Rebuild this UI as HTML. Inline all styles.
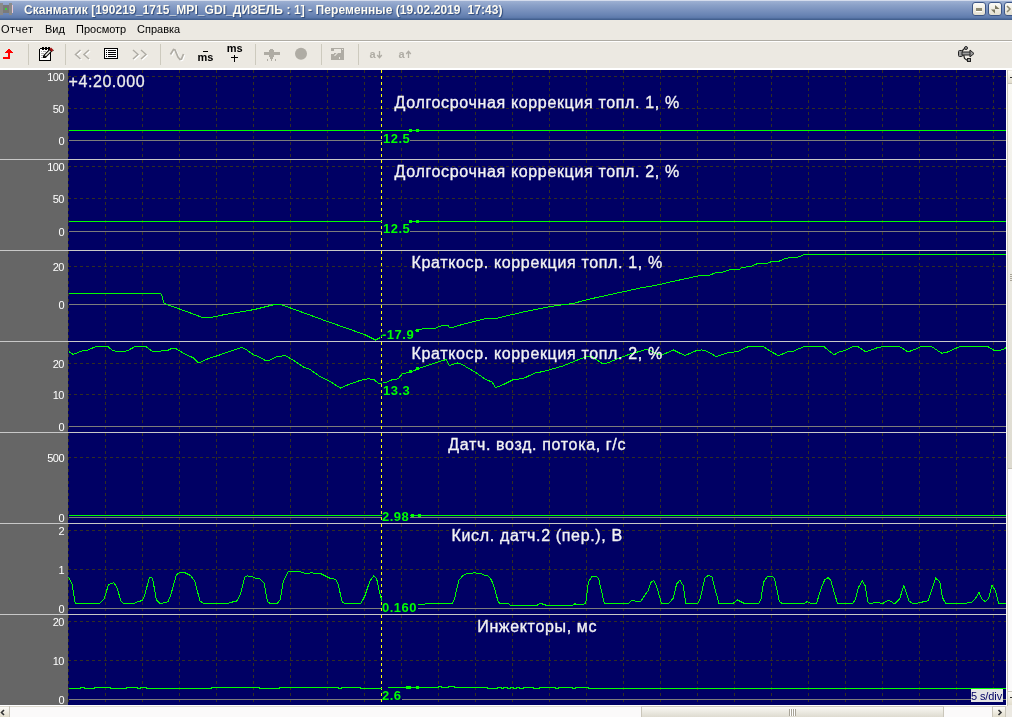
<!DOCTYPE html>
<html><head><meta charset="utf-8">
<style>
html,body{margin:0;padding:0;width:1012px;height:717px;overflow:hidden;background:#ece9e2;font-family:"Liberation Sans",sans-serif;}
#title{position:absolute;left:0;top:0;width:1012px;height:20px;background:linear-gradient(#d3dbec 0px,#d3dbec 1px,#9db0d2 1px,#8ba1c8 5px,#7a92be 10px,#6984b4 15px,#5b78aa 18px,#43608f 19px,#43608f 20px);}
#title .tx{position:absolute;left:24px;top:3px;font-weight:bold;font-size:12px;color:#fffcf2;white-space:pre;text-shadow:1px 1px 1px #2f4a7a;letter-spacing:0.07px}
#menu{position:absolute;left:0;top:20px;width:1012px;height:20px;background:#ece9e2;border-bottom:1px solid #afaca4;}
#menu span{position:absolute;top:3px;font-size:11px;color:#000}
#tbline{position:absolute;left:0;top:41px;width:1012px;height:1px;background:#fff}
#toolbar{position:absolute;left:0;top:42px;width:1012px;height:26px;background:#ece9e2}
#tbbot{position:absolute;left:0;top:68px;width:1012px;height:2px;background:#fff}
svg{position:absolute;left:0;top:0;will-change:transform}
#title .tx,#menu span{will-change:transform}
.al{font-family:"Liberation Sans",sans-serif;font-size:11px;fill:#fff;text-anchor:end;letter-spacing:-0.5px}
.tl{font-family:"Liberation Sans",sans-serif;font-size:16px;fill:#f2f2f2;stroke:#f2f2f2;stroke-width:0.35px;text-anchor:middle;letter-spacing:0.65px}
.tm{font-family:"Liberation Sans",sans-serif;font-size:16px;fill:#ececec;stroke:#ececec;stroke-width:0.3px;letter-spacing:0.55px}
.vl{font-family:"Liberation Sans",sans-serif;font-size:13px;font-weight:bold;fill:#00ff00;letter-spacing:0.5px}
.ms{font-family:"Liberation Sans",sans-serif;font-size:11px;font-weight:bold;fill:#000}
.ad{font-family:"Liberation Sans",sans-serif;font-size:11px;font-weight:bold;fill:#afaca4}
.sd{font-family:"Liberation Sans",sans-serif;font-size:11px;fill:#000064;letter-spacing:-0.1px}
</style></head><body>
<div id="title"><div class="tx">Сканматик [190219_1715_MPI_GDI_ДИЗЕЛЬ : 1] - Переменные (19.02.2019  17:43)</div></div>
<div id="menu"><span style="left:1px;letter-spacing:0.5px">Отчет</span><span style="left:45px">Вид</span><span style="left:76px">Просмотр</span><span style="left:137px">Справка</span></div>
<div id="tbline"></div>
<div id="toolbar"></div>
<div id="tbbot"></div>
<svg width="1012" height="717" viewBox="0 0 1012 717" shape-rendering="crispEdges">
<defs>
<linearGradient id="btn" x1="0" y1="0" x2="0" y2="1"><stop offset="0" stop-color="#fdfcf8"/><stop offset="1" stop-color="#e2ddcc"/></linearGradient>
<linearGradient id="thumb" x1="0" y1="0" x2="0" y2="1"><stop offset="0" stop-color="#f9f8f3"/><stop offset="1" stop-color="#dedbd0"/></linearGradient>
</defs>
<!-- title icon -->
<rect x="0" y="3" width="3" height="12" fill="#8a8a8a"/>
<rect x="9" y="3" width="3" height="12" fill="#8a8a8a"/>
<rect x="3" y="5" width="6" height="8" fill="#7a7a7a"/>
<rect x="5" y="8" width="2" height="2" fill="#3cd23c"/>
<rect x="12" y="5" width="1" height="8" fill="#e8c8d8"/>
<!-- title buttons -->
<g shape-rendering="auto">
<rect x="972.5" y="2.5" width="13" height="13" rx="2.5" fill="url(#btn)" stroke="#3c5586"/>
<rect x="976" y="8" width="6" height="3" fill="#8c8872"/>
<rect x="976" y="11" width="6" height="1" fill="#fff"/>
<rect x="988.5" y="2.5" width="13" height="13" rx="2.5" fill="url(#btn)" stroke="#3c5586"/>
<path d="M995 5 L999.5 9 L995 9 Z M991 9.5 L995 9.5 L995 13.5 Z" fill="#7a7660"/>
<rect x="1004.5" y="2.5" width="13" height="13" rx="2.5" fill="url(#btn)" stroke="#3c5586"/>
<path d="M1007 6 L1010 9 L1007 12" fill="none" stroke="#8a8670" stroke-width="1.5"/>
</g>
<!-- toolbar separators -->
<rect x="28" y="44" width="1" height="21" fill="#cdcabe"/>
<rect x="65" y="44" width="1" height="21" fill="#cdcabe"/>
<rect x="160" y="44" width="1" height="21" fill="#cdcabe"/>
<rect x="255" y="44" width="1" height="21" fill="#cdcabe"/>
<rect x="321" y="44" width="1" height="21" fill="#cdcabe"/>
<rect x="358" y="44" width="1" height="21" fill="#cdcabe"/>
<!-- red arrow -->
<rect x="8" y="49" width="2" height="1" fill="#f00"/><rect x="7" y="50" width="4" height="1" fill="#f00"/><rect x="6" y="51" width="6" height="1" fill="#f00"/><rect x="5" y="52" width="8" height="1" fill="#f00"/><rect x="8" y="53" width="2" height="4" fill="#f00"/><rect x="3" y="57" width="7" height="2" fill="#f00"/>
<!-- notepad -->
<rect x="39" y="49" width="12" height="12" fill="#000"/>
<rect x="40" y="48" width="10" height="13" fill="#000"/>
<rect x="40" y="49" width="10" height="11" fill="#fff"/>
<rect x="42" y="47" width="2" height="3" fill="#000"/>
<rect x="45" y="47" width="2" height="3" fill="#000"/>
<rect x="48" y="47" width="2" height="3" fill="#000"/>
<rect x="41" y="51" width="1" height="1" fill="#b0b0b0"/>
<rect x="43" y="51" width="3" height="1" fill="#b0b0b0"/>
<rect x="41" y="53" width="3" height="1" fill="#b0b0b0"/>
<rect x="41" y="55" width="2" height="1" fill="#b0b0b0"/>
<rect x="41" y="57" width="2" height="1" fill="#b0b0b0"/>
<g shape-rendering="auto">
<path d="M44.5 56.5 L51 50" stroke="#000" stroke-width="3.6"/>
<path d="M45.3 55.7 L50.3 50.7" stroke="#f4f4f0" stroke-width="1.5"/>
<path d="M49.3 49.2 L51 47.5 L53.5 50 L51.8 51.7 Z" fill="#a01010"/>
<path d="M52 51.5 L53.5 50 L54 50.5 Z" fill="#000"/>
<path d="M43 58 L43 55 L46.5 58 Z" fill="#000"/>
</g>
<!-- << shadow -->
<g transform="translate(1,1)" shape-rendering="auto" fill="none" stroke="#ffffff" stroke-width="1.5">
<path d="M80.5 50 L75.5 54.5 L80.5 59"/><path d="M89 50 L84 54.5 L89 59"/>
<path d="M133 50 L138 54.5 L133 59"/><path d="M141 50 L146 54.5 L141 59"/>
<path d="M170.5 54.5 L173.5 49.5 L175 50 L178 57 L180 59.5 L181.5 59 L183.5 54" stroke-width="1.7"/>
</g>
<!-- << -->
<g shape-rendering="auto" fill="none" stroke="#afaca4" stroke-width="1.5">
<path d="M80.5 50 L75.5 54.5 L80.5 59"/><path d="M89 50 L84 54.5 L89 59"/>
<path d="M133 50 L138 54.5 L133 59"/><path d="M141 50 L146 54.5 L141 59"/>
<path d="M170.5 54.5 L173.5 49.5 L175 50 L178 57 L180 59.5 L181.5 59 L183.5 54" stroke-width="1.7"/>
</g>
<!-- list icon -->
<rect x="104" y="48" width="14" height="11" fill="#000"/>
<rect x="105" y="49" width="12" height="9" fill="#fff"/>
<rect x="108" y="50" width="8" height="1" fill="#000"/>
<rect x="108" y="52" width="8" height="1" fill="#000"/>
<rect x="108" y="54" width="8" height="1" fill="#000"/>
<rect x="108" y="56" width="8" height="1" fill="#000"/>
<rect x="106" y="50" width="1" height="1" fill="#000"/>
<rect x="106" y="52" width="1" height="1" fill="#000"/>
<rect x="106" y="54" width="1" height="1" fill="#000"/>
<rect x="106" y="56" width="1" height="1" fill="#000"/>
<!-- ms icons -->
<rect x="203" y="51" width="5" height="1" fill="#000"/>
<text x="197.5" y="60.7" class="ms">ms</text>
<text x="226.8" y="51.8" class="ms">ms</text>
<rect x="231" y="57" width="7" height="1" fill="#000"/>
<rect x="234" y="55" width="1" height="7" fill="#000"/>
<!-- plug -->
<rect x="264" y="52" width="16" height="3" fill="#afaca4"/>
<rect x="270" y="49" width="3" height="10" fill="#afaca4"/>
<rect x="269" y="50" width="5" height="7" fill="#afaca4"/>
<rect x="267" y="59" width="1" height="2" fill="#afaca4"/>
<rect x="271" y="59" width="1" height="2" fill="#afaca4"/>
<rect x="275" y="59" width="1" height="2" fill="#afaca4"/>
<!-- circle -->
<circle cx="301" cy="53.8" r="6" fill="#afaca4" shape-rendering="auto"/>
<!-- save icon -->
<rect x="331" y="48" width="13" height="12" fill="#afaca4"/>
<rect x="334" y="49" width="7" height="4" fill="#ece9e2"/>
<rect x="331" y="51" width="3" height="3" fill="#ece9e2"/>
<rect x="342" y="49" width="1" height="1" fill="#ece9e2"/>
<rect x="339" y="57" width="1" height="2" fill="#ece9e2"/>
<path d="M334.5 55.8 L337.5 52.8" stroke="#ece9e2" stroke-width="1.1" shape-rendering="auto"/>
<!-- a arrows -->
<text x="369.5" y="58" class="ad">a</text>
<path d="M379.5 51 v6 M377.2 55 l2.3 2.7 l2.3 -2.7" fill="none" stroke="#afaca4" stroke-width="1.3" shape-rendering="auto"/>
<text x="398.5" y="58" class="ad">a</text>
<path d="M408.5 58 v-6.5 M406.2 54 l2.3 -2.7 l2.3 2.7" fill="none" stroke="#afaca4" stroke-width="1.3" shape-rendering="auto"/>
<!-- USB -->
<g shape-rendering="auto">
<path d="M962 51 L965.5 47.5" stroke="#222" stroke-width="1.2"/>
<circle cx="966" cy="48" r="1.5" fill="#9a9a9a" stroke="#222" stroke-width="1"/>
<path d="M963.5 54 L964.5 58.5 L967.5 60.5" fill="none" stroke="#222" stroke-width="1.2"/>
<rect x="967.5" y="58.5" width="3" height="3" fill="#9a9a9a" stroke="#222" stroke-width="1"/>
<rect x="958.5" y="50.5" width="4" height="6" rx="1" fill="#9a9a9a" stroke="#222" stroke-width="1"/>
<rect x="962" y="52" width="9" height="3" fill="#9a9a9a" stroke="#222" stroke-width="1"/>
<path d="M970 50 L974 53.5 L970 57 Z" fill="#9a9a9a" stroke="#222" stroke-width="1"/>
</g>
<rect x="0" y="70" width="68" height="635" fill="#666666"/>
<rect x="68" y="70" width="938" height="635" fill="#000064"/>
<line x1="68.5" y1="70" x2="68.5" y2="159" stroke="#322e22" stroke-dasharray="3 3"/>
<line x1="105.5" y1="70" x2="105.5" y2="159" stroke="#322e22" stroke-dasharray="3 3"/>
<line x1="142.5" y1="70" x2="142.5" y2="159" stroke="#322e22" stroke-dasharray="3 3"/>
<line x1="179.5" y1="70" x2="179.5" y2="159" stroke="#322e22" stroke-dasharray="3 3"/>
<line x1="216.5" y1="70" x2="216.5" y2="159" stroke="#322e22" stroke-dasharray="3 3"/>
<line x1="253.5" y1="70" x2="253.5" y2="159" stroke="#322e22" stroke-dasharray="3 3"/>
<line x1="290.5" y1="70" x2="290.5" y2="159" stroke="#322e22" stroke-dasharray="3 3"/>
<line x1="327.5" y1="70" x2="327.5" y2="159" stroke="#322e22" stroke-dasharray="3 3"/>
<line x1="364.5" y1="70" x2="364.5" y2="159" stroke="#322e22" stroke-dasharray="3 3"/>
<line x1="401.5" y1="70" x2="401.5" y2="159" stroke="#322e22" stroke-dasharray="3 3"/>
<line x1="438.5" y1="70" x2="438.5" y2="159" stroke="#322e22" stroke-dasharray="3 3"/>
<line x1="475.5" y1="70" x2="475.5" y2="159" stroke="#322e22" stroke-dasharray="3 3"/>
<line x1="512.5" y1="70" x2="512.5" y2="159" stroke="#322e22" stroke-dasharray="3 3"/>
<line x1="549.5" y1="70" x2="549.5" y2="159" stroke="#322e22" stroke-dasharray="3 3"/>
<line x1="586.5" y1="70" x2="586.5" y2="159" stroke="#322e22" stroke-dasharray="3 3"/>
<line x1="623.5" y1="70" x2="623.5" y2="159" stroke="#322e22" stroke-dasharray="3 3"/>
<line x1="660.5" y1="70" x2="660.5" y2="159" stroke="#322e22" stroke-dasharray="3 3"/>
<line x1="697.5" y1="70" x2="697.5" y2="159" stroke="#322e22" stroke-dasharray="3 3"/>
<line x1="734.5" y1="70" x2="734.5" y2="159" stroke="#322e22" stroke-dasharray="3 3"/>
<line x1="771.5" y1="70" x2="771.5" y2="159" stroke="#322e22" stroke-dasharray="3 3"/>
<line x1="808.5" y1="70" x2="808.5" y2="159" stroke="#322e22" stroke-dasharray="3 3"/>
<line x1="845.5" y1="70" x2="845.5" y2="159" stroke="#322e22" stroke-dasharray="3 3"/>
<line x1="882.5" y1="70" x2="882.5" y2="159" stroke="#322e22" stroke-dasharray="3 3"/>
<line x1="919.5" y1="70" x2="919.5" y2="159" stroke="#322e22" stroke-dasharray="3 3"/>
<line x1="956.5" y1="70" x2="956.5" y2="159" stroke="#322e22" stroke-dasharray="3 3"/>
<line x1="993.5" y1="70" x2="993.5" y2="159" stroke="#322e22" stroke-dasharray="3 3"/>
<line x1="68" y1="76.5" x2="1006" y2="76.5" stroke="#322e22" stroke-dasharray="3 3"/>
<line x1="68" y1="108.5" x2="1006" y2="108.5" stroke="#322e22" stroke-dasharray="3 3"/>
<line x1="69" y1="140.5" x2="1006" y2="140.5" stroke="#7c7c7c"/>
<line x1="68.5" y1="160" x2="68.5" y2="250" stroke="#322e22" stroke-dasharray="3 3"/>
<line x1="105.5" y1="160" x2="105.5" y2="250" stroke="#322e22" stroke-dasharray="3 3"/>
<line x1="142.5" y1="160" x2="142.5" y2="250" stroke="#322e22" stroke-dasharray="3 3"/>
<line x1="179.5" y1="160" x2="179.5" y2="250" stroke="#322e22" stroke-dasharray="3 3"/>
<line x1="216.5" y1="160" x2="216.5" y2="250" stroke="#322e22" stroke-dasharray="3 3"/>
<line x1="253.5" y1="160" x2="253.5" y2="250" stroke="#322e22" stroke-dasharray="3 3"/>
<line x1="290.5" y1="160" x2="290.5" y2="250" stroke="#322e22" stroke-dasharray="3 3"/>
<line x1="327.5" y1="160" x2="327.5" y2="250" stroke="#322e22" stroke-dasharray="3 3"/>
<line x1="364.5" y1="160" x2="364.5" y2="250" stroke="#322e22" stroke-dasharray="3 3"/>
<line x1="401.5" y1="160" x2="401.5" y2="250" stroke="#322e22" stroke-dasharray="3 3"/>
<line x1="438.5" y1="160" x2="438.5" y2="250" stroke="#322e22" stroke-dasharray="3 3"/>
<line x1="475.5" y1="160" x2="475.5" y2="250" stroke="#322e22" stroke-dasharray="3 3"/>
<line x1="512.5" y1="160" x2="512.5" y2="250" stroke="#322e22" stroke-dasharray="3 3"/>
<line x1="549.5" y1="160" x2="549.5" y2="250" stroke="#322e22" stroke-dasharray="3 3"/>
<line x1="586.5" y1="160" x2="586.5" y2="250" stroke="#322e22" stroke-dasharray="3 3"/>
<line x1="623.5" y1="160" x2="623.5" y2="250" stroke="#322e22" stroke-dasharray="3 3"/>
<line x1="660.5" y1="160" x2="660.5" y2="250" stroke="#322e22" stroke-dasharray="3 3"/>
<line x1="697.5" y1="160" x2="697.5" y2="250" stroke="#322e22" stroke-dasharray="3 3"/>
<line x1="734.5" y1="160" x2="734.5" y2="250" stroke="#322e22" stroke-dasharray="3 3"/>
<line x1="771.5" y1="160" x2="771.5" y2="250" stroke="#322e22" stroke-dasharray="3 3"/>
<line x1="808.5" y1="160" x2="808.5" y2="250" stroke="#322e22" stroke-dasharray="3 3"/>
<line x1="845.5" y1="160" x2="845.5" y2="250" stroke="#322e22" stroke-dasharray="3 3"/>
<line x1="882.5" y1="160" x2="882.5" y2="250" stroke="#322e22" stroke-dasharray="3 3"/>
<line x1="919.5" y1="160" x2="919.5" y2="250" stroke="#322e22" stroke-dasharray="3 3"/>
<line x1="956.5" y1="160" x2="956.5" y2="250" stroke="#322e22" stroke-dasharray="3 3"/>
<line x1="993.5" y1="160" x2="993.5" y2="250" stroke="#322e22" stroke-dasharray="3 3"/>
<line x1="68" y1="166.5" x2="1006" y2="166.5" stroke="#322e22" stroke-dasharray="3 3"/>
<line x1="68" y1="198.5" x2="1006" y2="198.5" stroke="#322e22" stroke-dasharray="3 3"/>
<line x1="69" y1="231.5" x2="1006" y2="231.5" stroke="#7c7c7c"/>
<line x1="68.5" y1="251" x2="68.5" y2="341" stroke="#322e22" stroke-dasharray="3 3"/>
<line x1="105.5" y1="251" x2="105.5" y2="341" stroke="#322e22" stroke-dasharray="3 3"/>
<line x1="142.5" y1="251" x2="142.5" y2="341" stroke="#322e22" stroke-dasharray="3 3"/>
<line x1="179.5" y1="251" x2="179.5" y2="341" stroke="#322e22" stroke-dasharray="3 3"/>
<line x1="216.5" y1="251" x2="216.5" y2="341" stroke="#322e22" stroke-dasharray="3 3"/>
<line x1="253.5" y1="251" x2="253.5" y2="341" stroke="#322e22" stroke-dasharray="3 3"/>
<line x1="290.5" y1="251" x2="290.5" y2="341" stroke="#322e22" stroke-dasharray="3 3"/>
<line x1="327.5" y1="251" x2="327.5" y2="341" stroke="#322e22" stroke-dasharray="3 3"/>
<line x1="364.5" y1="251" x2="364.5" y2="341" stroke="#322e22" stroke-dasharray="3 3"/>
<line x1="401.5" y1="251" x2="401.5" y2="341" stroke="#322e22" stroke-dasharray="3 3"/>
<line x1="438.5" y1="251" x2="438.5" y2="341" stroke="#322e22" stroke-dasharray="3 3"/>
<line x1="475.5" y1="251" x2="475.5" y2="341" stroke="#322e22" stroke-dasharray="3 3"/>
<line x1="512.5" y1="251" x2="512.5" y2="341" stroke="#322e22" stroke-dasharray="3 3"/>
<line x1="549.5" y1="251" x2="549.5" y2="341" stroke="#322e22" stroke-dasharray="3 3"/>
<line x1="586.5" y1="251" x2="586.5" y2="341" stroke="#322e22" stroke-dasharray="3 3"/>
<line x1="623.5" y1="251" x2="623.5" y2="341" stroke="#322e22" stroke-dasharray="3 3"/>
<line x1="660.5" y1="251" x2="660.5" y2="341" stroke="#322e22" stroke-dasharray="3 3"/>
<line x1="697.5" y1="251" x2="697.5" y2="341" stroke="#322e22" stroke-dasharray="3 3"/>
<line x1="734.5" y1="251" x2="734.5" y2="341" stroke="#322e22" stroke-dasharray="3 3"/>
<line x1="771.5" y1="251" x2="771.5" y2="341" stroke="#322e22" stroke-dasharray="3 3"/>
<line x1="808.5" y1="251" x2="808.5" y2="341" stroke="#322e22" stroke-dasharray="3 3"/>
<line x1="845.5" y1="251" x2="845.5" y2="341" stroke="#322e22" stroke-dasharray="3 3"/>
<line x1="882.5" y1="251" x2="882.5" y2="341" stroke="#322e22" stroke-dasharray="3 3"/>
<line x1="919.5" y1="251" x2="919.5" y2="341" stroke="#322e22" stroke-dasharray="3 3"/>
<line x1="956.5" y1="251" x2="956.5" y2="341" stroke="#322e22" stroke-dasharray="3 3"/>
<line x1="993.5" y1="251" x2="993.5" y2="341" stroke="#322e22" stroke-dasharray="3 3"/>
<line x1="68" y1="266.5" x2="1006" y2="266.5" stroke="#322e22" stroke-dasharray="3 3"/>
<line x1="69" y1="304.5" x2="1006" y2="304.5" stroke="#7c7c7c"/>
<line x1="68.5" y1="342" x2="68.5" y2="432" stroke="#322e22" stroke-dasharray="3 3"/>
<line x1="105.5" y1="342" x2="105.5" y2="432" stroke="#322e22" stroke-dasharray="3 3"/>
<line x1="142.5" y1="342" x2="142.5" y2="432" stroke="#322e22" stroke-dasharray="3 3"/>
<line x1="179.5" y1="342" x2="179.5" y2="432" stroke="#322e22" stroke-dasharray="3 3"/>
<line x1="216.5" y1="342" x2="216.5" y2="432" stroke="#322e22" stroke-dasharray="3 3"/>
<line x1="253.5" y1="342" x2="253.5" y2="432" stroke="#322e22" stroke-dasharray="3 3"/>
<line x1="290.5" y1="342" x2="290.5" y2="432" stroke="#322e22" stroke-dasharray="3 3"/>
<line x1="327.5" y1="342" x2="327.5" y2="432" stroke="#322e22" stroke-dasharray="3 3"/>
<line x1="364.5" y1="342" x2="364.5" y2="432" stroke="#322e22" stroke-dasharray="3 3"/>
<line x1="401.5" y1="342" x2="401.5" y2="432" stroke="#322e22" stroke-dasharray="3 3"/>
<line x1="438.5" y1="342" x2="438.5" y2="432" stroke="#322e22" stroke-dasharray="3 3"/>
<line x1="475.5" y1="342" x2="475.5" y2="432" stroke="#322e22" stroke-dasharray="3 3"/>
<line x1="512.5" y1="342" x2="512.5" y2="432" stroke="#322e22" stroke-dasharray="3 3"/>
<line x1="549.5" y1="342" x2="549.5" y2="432" stroke="#322e22" stroke-dasharray="3 3"/>
<line x1="586.5" y1="342" x2="586.5" y2="432" stroke="#322e22" stroke-dasharray="3 3"/>
<line x1="623.5" y1="342" x2="623.5" y2="432" stroke="#322e22" stroke-dasharray="3 3"/>
<line x1="660.5" y1="342" x2="660.5" y2="432" stroke="#322e22" stroke-dasharray="3 3"/>
<line x1="697.5" y1="342" x2="697.5" y2="432" stroke="#322e22" stroke-dasharray="3 3"/>
<line x1="734.5" y1="342" x2="734.5" y2="432" stroke="#322e22" stroke-dasharray="3 3"/>
<line x1="771.5" y1="342" x2="771.5" y2="432" stroke="#322e22" stroke-dasharray="3 3"/>
<line x1="808.5" y1="342" x2="808.5" y2="432" stroke="#322e22" stroke-dasharray="3 3"/>
<line x1="845.5" y1="342" x2="845.5" y2="432" stroke="#322e22" stroke-dasharray="3 3"/>
<line x1="882.5" y1="342" x2="882.5" y2="432" stroke="#322e22" stroke-dasharray="3 3"/>
<line x1="919.5" y1="342" x2="919.5" y2="432" stroke="#322e22" stroke-dasharray="3 3"/>
<line x1="956.5" y1="342" x2="956.5" y2="432" stroke="#322e22" stroke-dasharray="3 3"/>
<line x1="993.5" y1="342" x2="993.5" y2="432" stroke="#322e22" stroke-dasharray="3 3"/>
<line x1="68" y1="363.5" x2="1006" y2="363.5" stroke="#322e22" stroke-dasharray="3 3"/>
<line x1="68" y1="394.5" x2="1006" y2="394.5" stroke="#322e22" stroke-dasharray="3 3"/>
<line x1="69" y1="426.5" x2="1006" y2="426.5" stroke="#7c7c7c"/>
<line x1="68.5" y1="433" x2="68.5" y2="523" stroke="#322e22" stroke-dasharray="3 3"/>
<line x1="105.5" y1="433" x2="105.5" y2="523" stroke="#322e22" stroke-dasharray="3 3"/>
<line x1="142.5" y1="433" x2="142.5" y2="523" stroke="#322e22" stroke-dasharray="3 3"/>
<line x1="179.5" y1="433" x2="179.5" y2="523" stroke="#322e22" stroke-dasharray="3 3"/>
<line x1="216.5" y1="433" x2="216.5" y2="523" stroke="#322e22" stroke-dasharray="3 3"/>
<line x1="253.5" y1="433" x2="253.5" y2="523" stroke="#322e22" stroke-dasharray="3 3"/>
<line x1="290.5" y1="433" x2="290.5" y2="523" stroke="#322e22" stroke-dasharray="3 3"/>
<line x1="327.5" y1="433" x2="327.5" y2="523" stroke="#322e22" stroke-dasharray="3 3"/>
<line x1="364.5" y1="433" x2="364.5" y2="523" stroke="#322e22" stroke-dasharray="3 3"/>
<line x1="401.5" y1="433" x2="401.5" y2="523" stroke="#322e22" stroke-dasharray="3 3"/>
<line x1="438.5" y1="433" x2="438.5" y2="523" stroke="#322e22" stroke-dasharray="3 3"/>
<line x1="475.5" y1="433" x2="475.5" y2="523" stroke="#322e22" stroke-dasharray="3 3"/>
<line x1="512.5" y1="433" x2="512.5" y2="523" stroke="#322e22" stroke-dasharray="3 3"/>
<line x1="549.5" y1="433" x2="549.5" y2="523" stroke="#322e22" stroke-dasharray="3 3"/>
<line x1="586.5" y1="433" x2="586.5" y2="523" stroke="#322e22" stroke-dasharray="3 3"/>
<line x1="623.5" y1="433" x2="623.5" y2="523" stroke="#322e22" stroke-dasharray="3 3"/>
<line x1="660.5" y1="433" x2="660.5" y2="523" stroke="#322e22" stroke-dasharray="3 3"/>
<line x1="697.5" y1="433" x2="697.5" y2="523" stroke="#322e22" stroke-dasharray="3 3"/>
<line x1="734.5" y1="433" x2="734.5" y2="523" stroke="#322e22" stroke-dasharray="3 3"/>
<line x1="771.5" y1="433" x2="771.5" y2="523" stroke="#322e22" stroke-dasharray="3 3"/>
<line x1="808.5" y1="433" x2="808.5" y2="523" stroke="#322e22" stroke-dasharray="3 3"/>
<line x1="845.5" y1="433" x2="845.5" y2="523" stroke="#322e22" stroke-dasharray="3 3"/>
<line x1="882.5" y1="433" x2="882.5" y2="523" stroke="#322e22" stroke-dasharray="3 3"/>
<line x1="919.5" y1="433" x2="919.5" y2="523" stroke="#322e22" stroke-dasharray="3 3"/>
<line x1="956.5" y1="433" x2="956.5" y2="523" stroke="#322e22" stroke-dasharray="3 3"/>
<line x1="993.5" y1="433" x2="993.5" y2="523" stroke="#322e22" stroke-dasharray="3 3"/>
<line x1="68" y1="457.5" x2="1006" y2="457.5" stroke="#322e22" stroke-dasharray="3 3"/>
<line x1="69" y1="517.5" x2="1006" y2="517.5" stroke="#7c7c7c"/>
<line x1="68.5" y1="524" x2="68.5" y2="614" stroke="#322e22" stroke-dasharray="3 3"/>
<line x1="105.5" y1="524" x2="105.5" y2="614" stroke="#322e22" stroke-dasharray="3 3"/>
<line x1="142.5" y1="524" x2="142.5" y2="614" stroke="#322e22" stroke-dasharray="3 3"/>
<line x1="179.5" y1="524" x2="179.5" y2="614" stroke="#322e22" stroke-dasharray="3 3"/>
<line x1="216.5" y1="524" x2="216.5" y2="614" stroke="#322e22" stroke-dasharray="3 3"/>
<line x1="253.5" y1="524" x2="253.5" y2="614" stroke="#322e22" stroke-dasharray="3 3"/>
<line x1="290.5" y1="524" x2="290.5" y2="614" stroke="#322e22" stroke-dasharray="3 3"/>
<line x1="327.5" y1="524" x2="327.5" y2="614" stroke="#322e22" stroke-dasharray="3 3"/>
<line x1="364.5" y1="524" x2="364.5" y2="614" stroke="#322e22" stroke-dasharray="3 3"/>
<line x1="401.5" y1="524" x2="401.5" y2="614" stroke="#322e22" stroke-dasharray="3 3"/>
<line x1="438.5" y1="524" x2="438.5" y2="614" stroke="#322e22" stroke-dasharray="3 3"/>
<line x1="475.5" y1="524" x2="475.5" y2="614" stroke="#322e22" stroke-dasharray="3 3"/>
<line x1="512.5" y1="524" x2="512.5" y2="614" stroke="#322e22" stroke-dasharray="3 3"/>
<line x1="549.5" y1="524" x2="549.5" y2="614" stroke="#322e22" stroke-dasharray="3 3"/>
<line x1="586.5" y1="524" x2="586.5" y2="614" stroke="#322e22" stroke-dasharray="3 3"/>
<line x1="623.5" y1="524" x2="623.5" y2="614" stroke="#322e22" stroke-dasharray="3 3"/>
<line x1="660.5" y1="524" x2="660.5" y2="614" stroke="#322e22" stroke-dasharray="3 3"/>
<line x1="697.5" y1="524" x2="697.5" y2="614" stroke="#322e22" stroke-dasharray="3 3"/>
<line x1="734.5" y1="524" x2="734.5" y2="614" stroke="#322e22" stroke-dasharray="3 3"/>
<line x1="771.5" y1="524" x2="771.5" y2="614" stroke="#322e22" stroke-dasharray="3 3"/>
<line x1="808.5" y1="524" x2="808.5" y2="614" stroke="#322e22" stroke-dasharray="3 3"/>
<line x1="845.5" y1="524" x2="845.5" y2="614" stroke="#322e22" stroke-dasharray="3 3"/>
<line x1="882.5" y1="524" x2="882.5" y2="614" stroke="#322e22" stroke-dasharray="3 3"/>
<line x1="919.5" y1="524" x2="919.5" y2="614" stroke="#322e22" stroke-dasharray="3 3"/>
<line x1="956.5" y1="524" x2="956.5" y2="614" stroke="#322e22" stroke-dasharray="3 3"/>
<line x1="993.5" y1="524" x2="993.5" y2="614" stroke="#322e22" stroke-dasharray="3 3"/>
<line x1="68" y1="530.5" x2="1006" y2="530.5" stroke="#322e22" stroke-dasharray="3 3"/>
<line x1="68" y1="569.5" x2="1006" y2="569.5" stroke="#322e22" stroke-dasharray="3 3"/>
<line x1="69" y1="608.5" x2="1006" y2="608.5" stroke="#7c7c7c"/>
<line x1="68.5" y1="615" x2="68.5" y2="705" stroke="#322e22" stroke-dasharray="3 3"/>
<line x1="105.5" y1="615" x2="105.5" y2="705" stroke="#322e22" stroke-dasharray="3 3"/>
<line x1="142.5" y1="615" x2="142.5" y2="705" stroke="#322e22" stroke-dasharray="3 3"/>
<line x1="179.5" y1="615" x2="179.5" y2="705" stroke="#322e22" stroke-dasharray="3 3"/>
<line x1="216.5" y1="615" x2="216.5" y2="705" stroke="#322e22" stroke-dasharray="3 3"/>
<line x1="253.5" y1="615" x2="253.5" y2="705" stroke="#322e22" stroke-dasharray="3 3"/>
<line x1="290.5" y1="615" x2="290.5" y2="705" stroke="#322e22" stroke-dasharray="3 3"/>
<line x1="327.5" y1="615" x2="327.5" y2="705" stroke="#322e22" stroke-dasharray="3 3"/>
<line x1="364.5" y1="615" x2="364.5" y2="705" stroke="#322e22" stroke-dasharray="3 3"/>
<line x1="401.5" y1="615" x2="401.5" y2="705" stroke="#322e22" stroke-dasharray="3 3"/>
<line x1="438.5" y1="615" x2="438.5" y2="705" stroke="#322e22" stroke-dasharray="3 3"/>
<line x1="475.5" y1="615" x2="475.5" y2="705" stroke="#322e22" stroke-dasharray="3 3"/>
<line x1="512.5" y1="615" x2="512.5" y2="705" stroke="#322e22" stroke-dasharray="3 3"/>
<line x1="549.5" y1="615" x2="549.5" y2="705" stroke="#322e22" stroke-dasharray="3 3"/>
<line x1="586.5" y1="615" x2="586.5" y2="705" stroke="#322e22" stroke-dasharray="3 3"/>
<line x1="623.5" y1="615" x2="623.5" y2="705" stroke="#322e22" stroke-dasharray="3 3"/>
<line x1="660.5" y1="615" x2="660.5" y2="705" stroke="#322e22" stroke-dasharray="3 3"/>
<line x1="697.5" y1="615" x2="697.5" y2="705" stroke="#322e22" stroke-dasharray="3 3"/>
<line x1="734.5" y1="615" x2="734.5" y2="705" stroke="#322e22" stroke-dasharray="3 3"/>
<line x1="771.5" y1="615" x2="771.5" y2="705" stroke="#322e22" stroke-dasharray="3 3"/>
<line x1="808.5" y1="615" x2="808.5" y2="705" stroke="#322e22" stroke-dasharray="3 3"/>
<line x1="845.5" y1="615" x2="845.5" y2="705" stroke="#322e22" stroke-dasharray="3 3"/>
<line x1="882.5" y1="615" x2="882.5" y2="705" stroke="#322e22" stroke-dasharray="3 3"/>
<line x1="919.5" y1="615" x2="919.5" y2="705" stroke="#322e22" stroke-dasharray="3 3"/>
<line x1="956.5" y1="615" x2="956.5" y2="705" stroke="#322e22" stroke-dasharray="3 3"/>
<line x1="993.5" y1="615" x2="993.5" y2="705" stroke="#322e22" stroke-dasharray="3 3"/>
<line x1="68" y1="621.5" x2="1006" y2="621.5" stroke="#322e22" stroke-dasharray="3 3"/>
<line x1="68" y1="660.5" x2="1006" y2="660.5" stroke="#322e22" stroke-dasharray="3 3"/>
<line x1="69" y1="699.5" x2="1006" y2="699.5" stroke="#7c7c7c"/>
<rect x="0" y="159" width="1006" height="1" fill="#c8c8c8"/>
<rect x="0" y="250" width="1006" height="1" fill="#c8c8c8"/>
<rect x="0" y="341" width="1006" height="1" fill="#c8c8c8"/>
<rect x="0" y="432" width="1006" height="1" fill="#c8c8c8"/>
<rect x="0" y="523" width="1006" height="1" fill="#c8c8c8"/>
<rect x="0" y="614" width="1006" height="1" fill="#c8c8c8"/>
<line x1="381.5" y1="70" x2="381.5" y2="159" stroke="#ffff00" stroke-dasharray="3 3"/>
<line x1="381.5" y1="160" x2="381.5" y2="250" stroke="#ffff00" stroke-dasharray="3 3"/>
<line x1="381.5" y1="251" x2="381.5" y2="341" stroke="#ffff00" stroke-dasharray="3 3"/>
<line x1="381.5" y1="342" x2="381.5" y2="432" stroke="#ffff00" stroke-dasharray="3 3"/>
<line x1="381.5" y1="433" x2="381.5" y2="523" stroke="#ffff00" stroke-dasharray="3 3"/>
<line x1="381.5" y1="524" x2="381.5" y2="614" stroke="#ffff00" stroke-dasharray="3 3"/>
<line x1="381.5" y1="615" x2="381.5" y2="705" stroke="#ffff00" stroke-dasharray="3 3"/>
<polyline points="68.5,130.5 1005.5,130.5" fill="none" stroke="#00ff00" stroke-width="1"/>
<polyline points="68.5,221.5 1005.5,221.5" fill="none" stroke="#00ff00" stroke-width="1"/>
<polyline points="68.5,293.5 160.5,293.5 162.5,296.5 163.5,302.5 166.5,304.5 179.5,309.0 194.5,314.5 202.5,317.5 210.5,317.5 222.5,315.0 254.5,309.5 276.5,304.0 279.5,304.0 327.5,321.5 364.5,334.5 375.5,340.0 380.5,337.5 382.5,335.0 388.5,333.5 415.5,330.5 420.5,329.5 425.5,328.1 435.5,328.1 443.5,325.0 447.5,325.0 450.0,328.1 455.5,326.5 460.5,325.0 484.9,318.8 497.8,318.0 524.7,311.6 550.4,306.5 565.8,304.4 573.5,303.4 587.7,299.5 614.7,293.6 640.4,288.0 655.8,285.4 671.2,281.8 699.5,275.7 708.1,275.7 715.5,272.9 721.5,272.4 729.1,269.9 738.3,269.9 741.7,267.8 751.7,266.0 757.5,263.6 766.9,263.6 772.7,261.0 779.5,261.0 786.2,258.1 796.2,257.6 801.3,255.9 803.8,254.5 1005.5,254.5" fill="none" stroke="#00ff00" stroke-width="1"/>
<polyline points="68.9,351.6 73.1,354.5 82.3,350.8 87.4,350.3 94.9,346.9 108.4,346.9 111.7,349.9 117.6,351.9 123.5,351.6 127.7,350.6 134.4,346.9 146.2,346.9 151.2,350.6 154.6,351.9 158.8,351.6 163.0,350.3 168.0,350.3 172.2,348.1 176.4,348.9 184.8,354.0 193.2,357.8 197.4,362.0 200.8,362.0 208.3,358.7 220.1,354.8 225.5,352.8 232.2,350.6 240.6,347.7 244.0,348.1 253.2,354.5 260.8,357.8 265.8,360.8 269.2,360.3 275.9,357.0 281.8,356.1 284.3,355.3 288.5,357.3 296.1,362.0 302.8,366.7 310.3,369.6 319.6,376.3 329.7,381.3 340.6,388.1 348.1,384.7 359.9,380.5 368.3,378.8 374.2,379.7 378.5,383.5 381.5,383.5 385.5,382.5 392.3,379.7 398.2,378.8 402.4,373.8 410.8,372.1 418.3,368.7 432.6,363.7 446.1,359.5 449.4,365.4 457.8,362.9 460.3,363.4 476.3,372.9 484.7,378.8 492.2,382.2 495.6,387.6 503.2,384.7 513.2,379.7 523.3,378.5 535.1,372.9 541.8,371.8 547.2,370.4 562.3,366.2 580.8,358.7 586.7,356.6 592.6,357.0 602.7,363.7 607.7,362.9 617.8,358.7 631.2,353.6 637.9,351.9 645.5,349.4 651.4,351.1 658.1,354.5 661.5,355.3 673.2,349.9 685.0,355.6 695.0,351.1 701.8,349.9 705.5,350.6 716.4,356.6 727.3,352.8 737.4,351.6 748.3,346.6 763.5,346.6 769.3,350.6 778.6,355.8 787.8,351.6 793.7,351.1 803.8,346.6 823.9,346.6 834.0,354.8 839.9,351.6 845.8,350.3 852.6,346.6 858.5,346.9 866.0,351.9 876.1,348.1 882.8,346.6 899.6,346.6 908.0,351.9 916.4,348.9 920.6,346.6 931.5,346.6 941.6,353.1 945.8,352.8 958.4,347.2 960.1,346.6 987.8,346.6 994.5,350.6 1002.1,349.9 1006.0,347.7" fill="none" stroke="#00ff00" stroke-width="1"/>
<polyline points="68.5,515.5 1005.5,515.5" fill="none" stroke="#00ff00" stroke-width="1"/>
<polyline points="68.5,577.3 71.9,583.2 75.3,603.8 99.1,603.8 104.2,599.1 108.4,584.9 110.9,583.7 113.9,582.7 116.8,587.4 121.0,600.8 124.0,603.8 133.6,603.8 137.8,601.7 142.5,600.5 144.5,595.8 149.5,577.3 152.6,578.1 156.3,600.0 160.5,603.8 168.0,601.7 171.0,594.1 176.4,574.8 179.8,572.6 184.8,572.6 190.7,575.6 194.9,581.5 199.9,600.8 204.1,603.8 225.5,603.8 237.3,600.8 240.6,594.1 244.8,577.3 247.3,576.0 251.5,576.1 255.7,578.6 259.9,579.0 264.1,583.2 267.5,601.7 270.5,603.8 276.7,603.8 280.1,600.0 283.5,580.7 288.0,571.9 301.1,571.9 306.1,573.9 311.2,572.8 321.3,573.9 329.6,578.1 335.5,579.3 338.0,584.0 342.2,601.7 345.1,603.8 360.7,603.8 364.9,595.8 370.0,580.7 373.7,576.0 376.7,579.0 379.2,590.7 382.6,603.3 384.5,604.5 418.3,605.0 424.2,604.5 425.1,603.8 451.9,603.8 454.5,599.1 458.7,580.7 462.9,575.6 467.0,573.6 474.6,572.8 481.3,573.6 484.7,575.6 488.0,576.0 491.4,579.8 494.8,589.1 498.1,601.7 500.6,603.8 509.0,603.8 509.9,605.0 537.6,605.0 539.3,603.8 541.8,603.8 545.5,605.0 573.3,605.0 574.9,603.8 578.3,605.0 585.0,603.8 585.9,601.7 588.4,582.3 591.7,576.5 595.9,576.5 598.5,578.1 604.3,603.3 605.2,603.8 627.9,603.8 631.2,600.8 634.6,600.8 636.3,601.7 640.5,601.7 648.0,590.7 651.4,581.5 653.9,580.7 656.4,585.7 661.5,603.3 663.1,603.8 668.2,603.8 673.2,598.3 676.6,584.0 679.9,580.3 683.3,585.7 685.8,603.3 697.6,603.8 700.1,599.1 705.1,577.3 708.9,575.3 712.2,577.3 714.7,587.4 718.9,603.8 732.4,603.8 737.4,600.0 745.0,603.8 758.4,603.8 760.9,600.0 763.5,582.3 767.7,576.0 771.9,576.0 774.4,578.1 779.4,601.7 782.8,603.8 803.8,603.8 807.1,601.7 810.5,603.3 816.4,603.8 821.4,587.4 824.8,579.8 828.1,577.6 830.6,579.8 837.4,603.3 843.2,603.8 852.6,603.3 855.1,600.0 858.5,587.4 862.3,581.0 865.2,585.7 867.7,601.7 870.2,603.8 873.6,602.8 879.5,602.8 882.0,603.8 888.7,600.0 894.6,603.8 899.6,599.1 903.8,585.4 908.9,600.8 913.1,603.8 918.9,602.8 928.2,600.8 931.5,590.7 935.7,578.1 939.9,582.0 942.5,597.5 945.8,603.8 956.7,603.8 963.5,603.3 971.8,602.5 975.2,599.1 978.9,592.1 981.9,599.1 985.3,601.7 988.6,598.3 992.0,585.4 995.4,590.7 998.7,603.3 1006.0,603.8" fill="none" stroke="#00ff00" stroke-width="1"/>
<polyline points="68.5,688.5 80.5,688.5 80.5,687.5 84.5,687.5 84.5,688.5 94.5,688.5 94.5,687.5 110.5,687.5 110.5,688.5 126.5,688.5 126.5,687.5 137.5,687.5 137.5,688.5 140.5,688.5 140.5,687.5 146.5,687.5 146.5,688.5 211.5,688.5 211.5,687.5 259.5,687.5 259.5,688.5 279.5,688.5 279.5,687.5 338.5,687.5 338.5,688.5 341.5,688.5 341.5,687.5 360.5,687.5 360.5,688.5 381.5,688.5 381.5,688.5 388.5,688.5 388.5,687.5 438.5,687.5 438.5,686.5 441.5,686.5 441.5,687.5 448.5,687.5 448.5,686.5 454.5,686.5 454.5,687.5 487.5,687.5 487.5,688.5 497.5,688.5 497.5,687.5 501.5,687.5 501.5,688.5 503.5,688.5 503.5,687.5 507.5,687.5 507.5,688.5 510.5,688.5 510.5,687.5 513.5,687.5 513.5,688.5 516.5,688.5 516.5,687.5 519.5,687.5 519.5,688.5 523.5,688.5 523.5,687.5 533.5,687.5 533.5,688.5 539.5,688.5 539.5,687.5 555.5,687.5 555.5,688.5 558.5,688.5 558.5,687.5 572.5,687.5 572.5,688.5 575.5,688.5 575.5,687.5 588.5,687.5 588.5,688.5 1005.5,688.5" fill="none" stroke="#00ff00" stroke-width="1"/>
<rect x="382" y="131" width="28" height="14" fill="#000064"/>
<rect x="382" y="221" width="28" height="14" fill="#000064"/>
<rect x="382" y="327" width="33" height="14" fill="#000064"/>
<rect x="382" y="383" width="28" height="14" fill="#000064"/>
<rect x="382" y="509" width="28" height="14" fill="#000064"/>
<rect x="382" y="600" width="36" height="14" fill="#000064"/>
<rect x="382" y="688" width="20" height="16" fill="#000064"/>
<rect x="409" y="129" width="3" height="3" fill="#00ff00"/>
<rect x="416" y="129" width="3" height="3" fill="#00ff00"/>
<rect x="409" y="220" width="3" height="3" fill="#00ff00"/>
<rect x="416" y="220" width="3" height="3" fill="#00ff00"/>
<rect x="416" y="329" width="3" height="3" fill="#00ff00"/>
<rect x="409" y="370" width="3" height="3" fill="#00ff00"/>
<rect x="416" y="367" width="3" height="3" fill="#00ff00"/>
<rect x="411" y="514" width="3" height="3" fill="#00ff00"/>
<rect x="418" y="514" width="3" height="3" fill="#00ff00"/>
<rect x="406" y="686" width="3" height="3" fill="#00ff00"/>
<rect x="408" y="686" width="3" height="3" fill="#00ff00"/>
<rect x="416" y="686" width="3" height="3" fill="#00ff00"/>
<g shape-rendering="auto">
<text x="383" y="143" class="vl">12.5</text>
<text x="383" y="233" class="vl">12.5</text>
<text x="382" y="339" class="vl">-17.9</text>
<text x="383" y="395" class="vl">13.3</text>
<text x="382" y="521" class="vl">2.98</text>
<text x="382" y="612" class="vl">0.160</text>
<text x="382" y="700" class="vl">2.6</text>
<text x="64" y="80.5" class="al">100</text>
<text x="64" y="112.5" class="al">50</text>
<text x="64" y="144.5" class="al">0</text>
<text x="64" y="170.5" class="al">100</text>
<text x="64" y="202.5" class="al">50</text>
<text x="64" y="235.5" class="al">0</text>
<text x="64" y="270.5" class="al">20</text>
<text x="64" y="308.5" class="al">0</text>
<text x="64" y="367.5" class="al">20</text>
<text x="64" y="398.5" class="al">10</text>
<text x="64" y="430.5" class="al">0</text>
<text x="64" y="461.5" class="al">500</text>
<text x="64" y="521.5" class="al">0</text>
<text x="64" y="534.5" class="al">2</text>
<text x="64" y="573.5" class="al">1</text>
<text x="64" y="612.5" class="al">0</text>
<text x="64" y="625.5" class="al">20</text>
<text x="64" y="664.5" class="al">10</text>
<text x="64" y="703.5" class="al">0</text>
<text x="537.2" y="107.5" class="tl">Долгосрочная коррекция топл. 1, %</text>
<text x="537.2" y="176.5" class="tl">Долгосрочная коррекция топл. 2, %</text>
<text x="537.2" y="267.5" class="tl">Краткоср. коррекция топл. 1, %</text>
<text x="537.2" y="358.5" class="tl">Краткоср. коррекция топл. 2, %</text>
<text x="537.2" y="449.5" class="tl">Датч. возд. потока, г/с</text>
<text x="537.2" y="540.5" class="tl">Кисл. датч.2 (пер.), В</text>
<text x="537.2" y="631.5" class="tl">Инжекторы, мс</text>
<text x="68.6" y="86.5" class="tm">+4:20.000</text>
</g>
<!-- right edge & vertical scrollbar -->
<rect x="1006" y="68" width="1" height="638" fill="#fff"/>
<rect x="1007" y="70" width="1" height="636" fill="#cac6ba"/>
<rect x="1008" y="70" width="4" height="636" fill="#ece9e2"/>
<rect x="1008" y="71" width="4" height="12" fill="url(#btn)"/>
<rect x="1008" y="83" width="4" height="1" fill="#c8c4b8"/>
<rect x="1008" y="84" width="4" height="385" fill="url(#thumb)"/>
<rect x="1008" y="468" width="4" height="1" fill="#c8c4b8"/>
<rect x="1008" y="469" width="4" height="222" fill="#fbfafa"/>
<rect x="1008" y="691" width="4" height="14" fill="url(#btn)"/>
<rect x="1008" y="691" width="4" height="1" fill="#c8c4b8"/>
<rect x="1010" y="697" width="2" height="1" fill="#333"/>
<rect x="1010" y="77" width="2" height="1" fill="#333"/>
<rect x="1010" y="274" width="2" height="1" fill="#a8a498"/>
<rect x="1010" y="276" width="2" height="1" fill="#a8a498"/>
<rect x="1010" y="278" width="2" height="1" fill="#a8a498"/>
<rect x="1010" y="280" width="2" height="1" fill="#a8a498"/>
<!-- bottom horizontal scrollbar -->
<rect x="0" y="705" width="1007" height="1" fill="#fff"/>
<rect x="0" y="706" width="1006" height="11" fill="#fbfafa"/>
<rect x="0" y="706" width="1006" height="1" fill="#dedbd0"/>
<rect x="0" y="707" width="9" height="10" fill="url(#btn)"/>
<rect x="9" y="706" width="1" height="11" fill="#c8c4b8"/>
<path d="M4 710 L1.5 712.5 L4 715" fill="none" stroke="#333" stroke-width="1.6" shape-rendering="auto"/>
<rect x="641" y="706" width="303" height="11" fill="#cac6ba"/>
<rect x="642" y="707" width="301" height="10" fill="url(#thumb)"/>
<rect x="789" y="709" width="1" height="7" fill="#a8a498"/>
<rect x="791" y="709" width="1" height="7" fill="#a8a498"/>
<rect x="793" y="709" width="1" height="7" fill="#a8a498"/>
<rect x="795" y="709" width="1" height="7" fill="#a8a498"/>
<rect x="790" y="709" width="1" height="7" fill="#fff"/>
<rect x="792" y="709" width="1" height="7" fill="#fff"/>
<rect x="794" y="709" width="1" height="7" fill="#fff"/>
<rect x="992" y="706" width="14" height="11" fill="#cac6ba"/>
<rect x="993" y="707" width="12" height="10" fill="url(#btn)"/>
<path d="M998.5 710 L1001 712.5 L998.5 715" fill="none" stroke="#333" stroke-width="1.6" shape-rendering="auto"/>
<rect x="1006" y="706" width="6" height="11" fill="#ece9e2"/>
<!-- s/div -->
<rect x="971" y="689" width="32" height="13" fill="#e4e4e4"/>
<text x="971" y="699.5" class="sd">5 s/div</text>
</svg>
</body></html>
